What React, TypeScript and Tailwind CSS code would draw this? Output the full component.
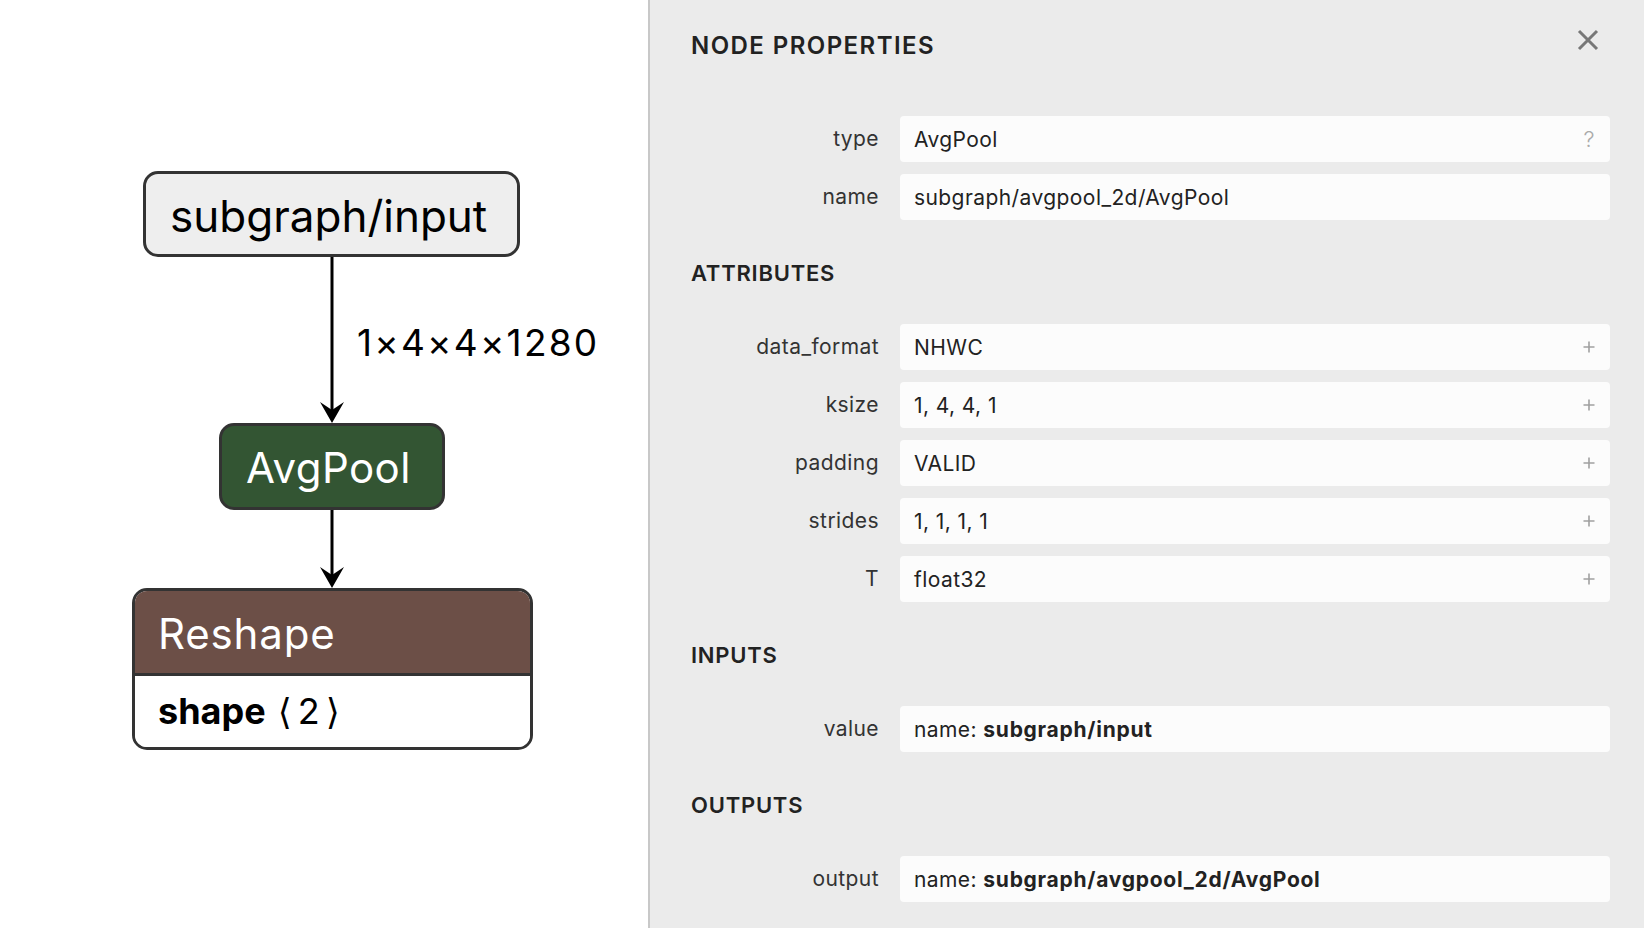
import React from 'react';

const FONT = { fontFamily: 'Inter, "DejaVu Sans", sans-serif' };

type Row = { label: string; value: React.ReactNode; icon?: '?' | '+' };

const PROPS: Row[] = [
  { label: 'type', value: 'AvgPool', icon: '?' },
  { label: 'name', value: 'subgraph/avgpool_2d/AvgPool' },
];

const ATTRS: Row[] = [
  { label: 'data_format', value: 'NHWC', icon: '+' },
  { label: 'ksize', value: '1, 4, 4, 1', icon: '+' },
  { label: 'padding', value: 'VALID', icon: '+' },
  { label: 'strides', value: '1, 1, 1, 1', icon: '+' },
  { label: 'T', value: 'float32', icon: '+' },
];

const INPUTS: Row[] = [
  { label: 'value', value: <>name: <span className="font-bold tracking-[0.035em]">subgraph/input</span></> },
];

const OUTPUTS: Row[] = [
  { label: 'output', value: <>name: <span className="font-bold tracking-[0.035em]">subgraph/avgpool_2d/AvgPool</span></> },
];

function Arrow({ x, y1, y2 }: { x: number; y1: number; y2: number }) {
  // vertical edge ending in a notched arrowhead at y2
  return (
    <g>
      <line x1={x} y1={y1} x2={x} y2={y2 - 8} stroke="#000" strokeWidth={3} />
      <polygon points={`${x},${y2} ${x - 12},${y2 - 21} ${x},${y2 - 13} ${x + 12},${y2 - 21}`} fill="#000" />
    </g>
  );
}

function Graph() {
  return (
    <div className="relative w-[648px] h-full bg-white shrink-0">
      <svg className="absolute inset-0" width={648} height={928}>
        <Arrow x={332} y1={257} y2={423} />
        <Arrow x={332} y1={510} y2={588} />
      </svg>

      {/* input node */}
      <div className="absolute left-[143px] top-[171px] w-[377px] h-[86px] rounded-[15px] border-[3px] border-[#333] bg-[#eeeeee] pl-[24px] pt-[16px] text-[44px] leading-[53px] text-black">
        subgraph/input
      </div>

      <div className="absolute left-[357px] top-[320px] text-[37px] leading-[45px] tracking-[0.06em] text-black">1×4×4×1280</div>

      {/* AvgPool */}
      <div className="absolute left-[219px] top-[423px] w-[226px] h-[87px] rounded-[15px] border-[3px] border-[#333] bg-[#335533] pl-[24px] pt-[16px] text-[42px] leading-[51px] tracking-[0.01em] text-white">
        AvgPool
      </div>

      {/* Reshape */}
      <div className="absolute left-[132px] top-[588px] w-[401px] h-[162px] rounded-[15px] border-[3px] border-[#333] overflow-hidden flex flex-col">
        <div className="h-[85px] bg-[#6c4f47] border-b-[3px] border-[#333] pl-[23px] pt-[17px] text-[42px] leading-[51px] tracking-[0.02em] text-white">
          Reshape
        </div>
        <div className="flex-1 bg-white pl-[23px] pt-[14px] text-[36px] leading-[43px] text-black">
          <span className="font-bold">shape</span>
          <span className="ml-[12px] tracking-[6px]">⟨2⟩</span>
        </div>
      </div>
    </div>
  );
}

function Field({ row }: { row: Row }) {
  return (
    <div className="flex items-center h-[46px]">
      <div className="w-[188px] text-right text-[21px] tracking-[0.02em] text-[#333]">{row.label}</div>
      <div className="ml-[21px] flex-1 h-full rounded-[4px] bg-[#fcfcfc] flex items-center justify-between pl-[14px] pr-[15px] text-[21px] tracking-[0.02em] text-[#222]">
        <span className="pt-[2px]">{row.value}</span>
        {row.icon === '?' && <span className="text-[#aaa] text-[22px] font-light">?</span>}
        {row.icon === '+' && (
          <svg width="12" height="12" viewBox="0 0 12 12">
            <path d="M6 0.5 V11.5 M0.5 6 H11.5" stroke="#a0a0a0" strokeWidth="1.6" />
          </svg>
        )}
      </div>
    </div>
  );
}

function Section({ title, rows }: { title: string; rows: Row[] }) {
  return (
    <div className="flex flex-col">
      <div className="mt-[39px] text-[22px] leading-[28px] font-semibold tracking-[0.035em] text-[#222]">{title}</div>
      <div className="mt-[37px] flex flex-col gap-[12px]">
        {rows.map(r => (
          <Field key={r.label} row={r} />
        ))}
      </div>
    </div>
  );
}

function Sidebar() {
  return (
    <div className="flex-1 h-full bg-[#ebebeb] border-l-2 border-[#c8c8c8] pl-[41px] pr-[34px]">
      <div className="flex justify-between items-start pt-[31px]">
        <div className="text-[24px] leading-[30px] font-semibold tracking-[0.06em] text-[#222]">NODE PROPERTIES</div>
        <svg width="22" height="22" viewBox="0 0 22 22" className="mr-[11px] -mt-[2px]">
          <path d="M2 2 L20 20 M20 2 L2 20" stroke="#777" strokeWidth="3" />
        </svg>
      </div>
      <div className="mt-[55px] flex flex-col gap-[12px]">
        {PROPS.map(r => (
          <Field key={r.label} row={r} />
        ))}
      </div>
      <Section title="ATTRIBUTES" rows={ATTRS} />
      <Section title="INPUTS" rows={INPUTS} />
      <Section title="OUTPUTS" rows={OUTPUTS} />
    </div>
  );
}

export default function App() {
  return (
    <div className="flex w-[1644px] h-[928px] overflow-hidden" style={FONT}>
      <Graph />
      <Sidebar />
    </div>
  );
}
